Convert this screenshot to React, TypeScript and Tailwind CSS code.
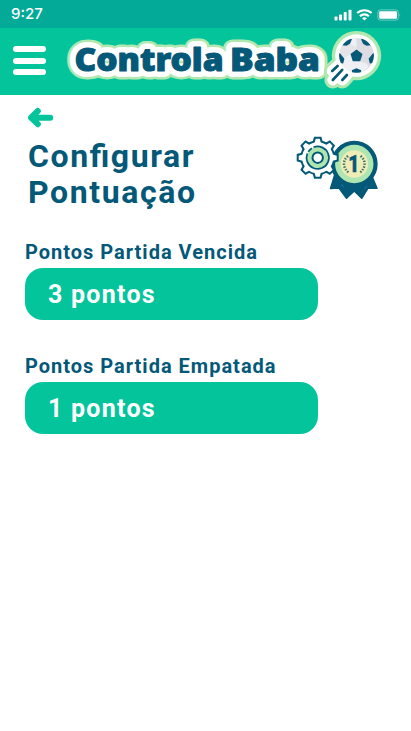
import React from "react";

const GEAR_TEETH = [0, 45, 90, 135, 180, 225, 270, 315];

function StatusBar() {
  return (
    <div className="flex h-7 items-center justify-between bg-[#04aa98] pl-[11px] pr-[9px] text-white">
      <span className="font-['Inter',sans-serif] text-[15px] leading-7 font-medium tracking-[0px]">9:27</span>
      <svg width="68" height="14" viewBox="334 7 68 14" fill="white" aria-hidden="true">
        <rect x="334.5" y="16.5" width="3" height="4" rx="0.8" />
        <rect x="339" y="14.5" width="3" height="6" rx="0.8" />
        <rect x="343.7" y="12" width="3" height="8.5" rx="0.8" />
        <rect x="348.5" y="9.7" width="3" height="10.8" rx="0.8" />
        <g fill="none" stroke="white" strokeWidth="2.1">
          <path d="M357.2 13.1a10.4 10.4 0 0 1 14.4 0" />
          <path d="M359.9 16.2a6.5 6.5 0 0 1 9 0" />
        </g>
        <path d="M362 18.2a3.6 3.6 0 0 1 4.8 0l-2.4 2.4z" />
        <rect x="377.9" y="9.9" width="20.4" height="10.2" rx="2.5" fill="none" stroke="white" strokeOpacity=".42" />
        <rect x="379.2" y="11.3" width="17.8" height="7.4" rx="1.2" />
        <path d="M399.5 13.2q1.5 1.7 0 3.5z" opacity=".5" />
      </svg>
    </div>
  );
}

function LogoText({ className }: { className: string }) {
  return (
    <g className={className} strokeLinejoin="round" strokeLinecap="round">
      <text x="74.5" y="71" textLength="149" lengthAdjust="spacingAndGlyphs">Controla</text>
      <text x="230" y="71" textLength="90" lengthAdjust="spacingAndGlyphs">Baba</text>
    </g>
  );
}

function BallStreaks() {
  return <path d="M332.2 71l5.4-5M332.8 80l9.4-10.2M342.3 80l4.6-5" />;
}

function Logo() {
  return (
    <svg width="320" height="67" viewBox="64 28 320 67" role="img" aria-label="Controla Baba">
      <g className="font-['Noto_Sans','Open_Sans',sans-serif] text-[31px] font-black">
        <LogoText className="fill-[#b0e8b0] stroke-[#b0e8b0] stroke-[17]" />
        <LogoText className="fill-white stroke-white stroke-[12]" />
        <LogoText className="fill-[#045878] stroke-[#045878] stroke-[1]" />
      </g>
      <g strokeLinecap="round">
        <circle cx="356.5" cy="55.6" r="24.7" fill="#b0e8b0" />
        <g fill="none" stroke="#b0e8b0" strokeWidth="17"><BallStreaks /></g>
        <circle cx="356.5" cy="55.6" r="21.3" fill="white" />
        <g fill="none" stroke="white" strokeWidth="11"><BallStreaks /></g>
        <g fill="none" stroke="#045878" strokeWidth="2.6"><BallStreaks /></g>
      </g>
      <clipPath id="ball"><circle cx="356.5" cy="55.4" r="17.4" /></clipPath>
      <g clipPath="url(#ball)">
        <path fill="#eff0f4" d="M338 37h19v38h-19z" />
        <path fill="#dcdce2" d="M356.5 37H376v38h-19.5z" />
        <path fill="#e4e4e9" d="M341 46l9-2 6.5 3v3l-6.5 4.5-6 3-4-4z" />
        <path fill="#eff0f4" d="M359.8 61.3l6.5 2 2.5 4-6.8 5-5.5-3.5-3-7.5z" />
        <g fill="#045878">
          <path d="M356.5 49.6l6 4.4-2.3 7.2h-7.4l-2.3-7.2z" />
          <path d="M342 45.2l6-7 4 .8-2 4.8-3.5 2z" />
          <path d="M371 45.2l-6-7-4 .8 2 4.8 3.5 2z" />
          <path d="M338 53l2.2.4 4.2 5.4-1.2 4.6-3.4-.4z" />
          <path d="M375 53l-2.2.4-4.2 5.4 1.2 4.6 3.4-.4z" />
          <path d="M351.8 70.3l4.7-2 4.7 2-.7 4h-8z" />
        </g>
      </g>
    </svg>
  );
}

function Header() {
  return (
    <header className="flex h-[67px] bg-[#04c49c]">
      <button className="mt-[18px] ml-[13px] flex h-[29px] w-[33px] flex-col justify-between" aria-label="Menu">
        <span className="h-1.5 w-full rounded-full bg-white" />
        <span className="h-1.5 w-full rounded-full bg-white" />
        <span className="h-1.5 w-full rounded-full bg-white" />
      </button>
      <div className="ml-[18px]"><Logo /></div>
    </header>
  );
}

function ScoreIcon() {
  return (
    <svg className="mt-[3px]" width="84" height="66" viewBox="295 135 84 66" aria-hidden="true">
      <g fill="#045878" stroke="#045878" strokeWidth="1.5" strokeLinejoin="round">
        <path d="M335 174l-4.5 14.5 8.5-.5 7.5 10.3 7.7-7.3 7.5 7.3 6.3-10.3 9 .3-6-14.3z" />
        <circle cx="354.3" cy="164" r="22.6" />
      </g>
      <path d="M341 184l3 3M367 186l-3 3" stroke="#126b91" strokeWidth="1.2" />
      <circle cx="354.3" cy="164" r="19.2" fill="#ade6b0" />
      <circle cx="354.3" cy="164" r="13.8" fill="#efedb5" />
      <path d="M348 156c-6 5-5 12 1 17M360.6 156c6 5 5 12-1 17" fill="none" stroke="#326c70" strokeWidth="2.4" strokeDasharray="1.4 1.5" />
      <text x="353.7" y="172.3" textAnchor="middle" className="fill-[#045878] stroke-[#045878] stroke-[0.5] font-['Roboto',sans-serif] text-[23px] font-black" textLength="11" lengthAdjust="spacingAndGlyphs">1</text>
      <g transform="translate(317.7 157.7)">
        <g fill="#045878">
          <circle r="17.5" />
          {GEAR_TEETH.map((angle) => (
            <path key={angle} transform={`rotate(${angle})`} d="M-5.2-15.5L-3.6-21H3.6L5.2-15.5z" />
          ))}
        </g>
        <g fill="white">
          <circle r="15.5" />
          {GEAR_TEETH.map((angle) => (
            <path key={angle} transform={`rotate(${angle})`} d="M-3.4-14L-2-19H2L3.4-14z" />
          ))}
        </g>
        <circle r="10.8" fill="#ade6b0" />
        <circle r="11.2" fill="none" stroke="#045878" strokeWidth="1.7" strokeDasharray="61 2 5 2.4" transform="rotate(-112)" />
        <circle r="5.2" fill="white" stroke="#045878" strokeWidth="2" />
      </g>
    </svg>
  );
}

function ScoreField({ label, value }: { label: string; value: string }) {
  return (
    <section className="h-[114px]">
      <h2 className="h-[30px] text-[20px] leading-[28px] font-bold tracking-[1px] text-[#045878]">{label}</h2>
      <button className="flex h-[52px] w-[293px] items-center rounded-[18px] bg-[#04c49c] pt-px pl-[23px] text-[25px] font-bold tracking-[1.25px] text-white">
        {value}
      </button>
    </section>
  );
}

export default function App() {
  return (
    <div className="min-h-[731px] w-[411px] overflow-hidden bg-white font-['Roboto',sans-serif]">
      <StatusBar />
      <Header />
      <main>
        <button className="mt-3 ml-7 block" aria-label="Voltar">
          <svg width="26" height="21" viewBox="28 107 26 21" fill="none" stroke="#04c49c" strokeWidth="6" strokeLinecap="round" strokeLinejoin="round">
            <path d="M37.8 111l-6.8 6.6 6.8 6.6M32 117.7h18.2" />
          </svg>
        </button>
        <div className="ml-7 flex h-[82px] justify-between pt-[4px] pr-8">
          <div className="pt-1.5">
            <h1 className="w-[200px] text-[32px] leading-9 font-bold tracking-[1.6px] text-[#045878] [font-feature-settings:'liga'_1]">Configurar Pontuação</h1>
          </div>
          <ScoreIcon />
        </div>
        <div className="mt-7 ml-[25px]">
          <ScoreField label="Pontos Partida Vencida" value="3 pontos" />
          <ScoreField label="Pontos Partida Empatada" value="1 pontos" />
        </div>
      </main>
    </div>
  );
}
